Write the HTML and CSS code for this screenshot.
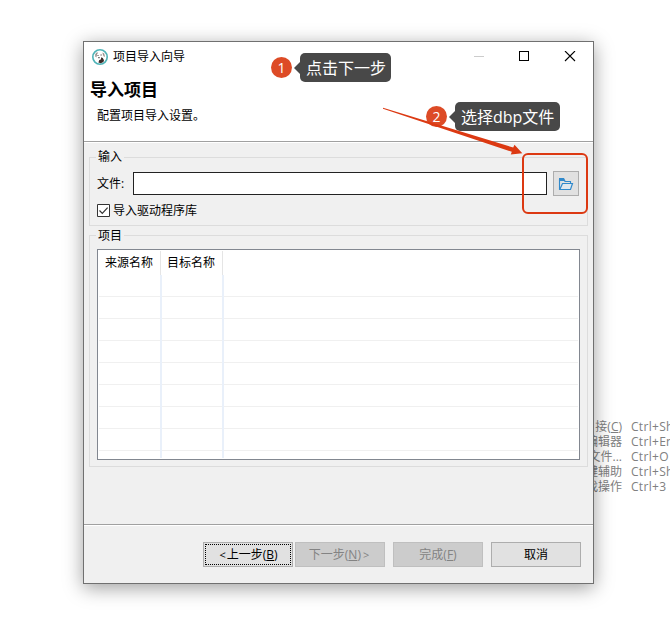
FILE: index.html
```html
<!DOCTYPE html>
<html lang="zh-CN">
<head>
<meta charset="utf-8">
<title>项目导入向导</title>
<link rel="stylesheet" href="styles.css">
</head>
<body>
<div class="menu">
  <span>接(<u>C</u>)</span><span>Ctrl+Sh</span>
  <span>编辑器</span><span>Ctrl+En</span>
  <span>文件...</span><span>Ctrl+O</span>
  <span>键辅助</span><span>Ctrl+Sh</span>
  <span>找操作</span><span>Ctrl+3</span>
</div>
<main class="dialog">
  <header class="head">
    <div class="titlebar">
      <svg class="logo" width="16" height="16" viewBox="0 0 16 16"><circle cx="8" cy="8" r="7.2" fill="#fff" stroke="#4fb3b7" stroke-width="1.6"/><path d="M3.2 5.3 4.6 3.6 6.2 3.4 5 5.4 4.4 8.4 3.2 7.6zM10.4 3.6l1.8 1 .7 2.6-.8.9-1.1-2z" fill="#99938f"/><path d="M6.4 13.6 7.3 11l1.5-.6.5-2.1 1.5.8 1.2 2.2-.6 1.8-2.6 1.2z" fill="#3b2b28"/><path d="M5.5 6h1v1h-1zM8.5 5.4h1.2v1.2H8.5zM6.3 8h1.3v1.3H6.3z" fill="#444"/></svg>
      <span class="name">项目导入向导</span>
      <svg class="controls" width="102" height="12" viewBox="0 0 102 12" shape-rendering="crispEdges"><path d="M0 5.5h10" stroke="#ccc"/><path d="M45.5.5h9v9h-9z" fill="none" stroke="#000"/><path d="M91 0l10 10M101 0 91 10" stroke="#000" stroke-width="1.1" shape-rendering="auto"/></svg>
    </div>
    <h1>导入项目</h1>
    <p>配置项目导入设置。</p>
  </header>
  <section class="content">
    <fieldset class="input-group">
      <legend>输入</legend>
      <div class="file-row">
        <label for="file">文件:</label>
        <input id="file" type="text">
        <button class="browse" aria-label="浏览"><svg width="16" height="14" viewBox="0 0 16 14"><path d="M1.5 12.5v-10h4l1.5 2h5.5v2" fill="none" stroke="#3089cb" stroke-width="1.1"/><path d="M1 1h5l1.5 3H1z" fill="#3089cb"/><path d="M1.8 12.5 4.5 6.5h10l-2 6z" fill="#e1e8ee" stroke="#3089cb" stroke-width="1.2"/></svg></button>
      </div>
      <div class="check-row"><svg width="13" height="13" viewBox="0 0 13 13"><path d="M.5.5h12v12H.5z" fill="#fff" stroke="#333"/><path d="m2.5 6.5 2.8 2.8 5.3-5.6" fill="none" stroke="#333" stroke-width="1.2"/></svg><span>导入驱动程序库</span></div>
    </fieldset>
    <fieldset class="project-group">
      <legend>项目</legend>
      <div class="table">
        <div class="thead"><span>来源名称</span><span>目标名称</span></div>
        <div class="tbody"></div>
      </div>
    </fieldset>
  </section>
  <footer class="foot">
    <button class="focused"><i>&lt;</i>上一步(<u>B</u>)</button>
    <button class="off">下一步(<u>N</u>)<i>&gt;</i></button>
    <button class="off gap">完成(<u>F</u>)</button>
    <button class="gap">取消</button>
  </footer>
</main>
<div class="note note-1"><b>1</b><span>点击下一步</span></div>
<div class="note note-2"><b>2</b><span>选择dbp文件</span></div>
<svg class="arrow" width="142" height="52" viewBox="382 105 142 52"><path d="M383 107.7 513.2 147.6 514.5 144.8 522.3 153.3 510.8 154.6 511.8 151.8 383 108.8z" fill="#dc3912"/></svg>
<div class="highlight"></div>
</body>
</html>
```
FILE: styles.css
```css
* { box-sizing: border-box; }
body {
  margin: 0;
  width: 670px;
  height: 628px;
  padding: 41px 0 0 83px;
  overflow: hidden;
  position: relative;
  background: #fff;
  color: #000;
  font: 12px/16px "Open Sans", "Noto Sans CJK SC", sans-serif;
}
u { text-underline-offset: 1px; }
.menu {
  position: absolute;
  left: 582px;
  top: 419px;
  display: grid;
  grid-template-columns: 40px 39px;
  column-gap: 9px;
  grid-auto-rows: 15px;
  line-height: 15px;
  color: #808080;
  white-space: nowrap;
}
.menu span:nth-child(odd) { text-align: right; }
.menu span:nth-child(even) { letter-spacing: .3px; }
.dialog {
  position: relative;
  width: 511px;
  height: 543px;
  display: flex;
  flex-direction: column;
  background: #f0f0f0;
  border: 1px solid #707070;
  box-shadow: 0 4px 18px rgba(0, 0, 0, .38);
}
.head { height: 101px; background: #fff; border-bottom: 1px solid #fff; box-shadow: inset 0 -1px #a0a0a0; }
.titlebar { display: flex; align-items: center; height: 29px; padding: 0 17px 0 8px; }
.name { margin-left: 5px; }
.controls { margin-left: auto; }
.head h1 { margin: 9px 0 0 6px; font-size: 17px; line-height: 20px; font-weight: 700; }
.head p { margin: 8px 0 0 13px; }
.content { flex: 1; padding: 6px 5px 0; }
fieldset { margin: 0; min-width: 0; border: 1px solid #dcdcdc; }
legend { padding: 0 2px; margin-left: -1px; height: 16px; }
.input-group { height: 77px; padding: 0 8px 0 7px; }
.file-row { display: flex; align-items: center; height: 25px; margin-top: 6px; }
.file-row label { width: 36px; white-space: nowrap; }
.file-row input { width: 414px; height: 23px; padding: 0 3px; border: 1px solid #222; background: #fff; }
.browse { width: 26px; height: 25px; margin-left: 6px; padding: 0; border: 1px solid #adadad; background: #e1e1e1; display: grid; place-items: center; }
.check-row { display: flex; align-items: center; height: 16px; margin-top: 6px; gap: 3px; }
.check-row span { padding-top: 1px; }
.project-group { height: 240px; margin-top: 1px; padding: 0 7px; }
.project-group legend { padding-top: 1px; }
.table { width: 483px; height: 211px; margin-top: 6px; border: 1px solid #828790; background: #fff; padding: 1px; }
.thead { display: flex; height: 24px; line-height: 23px; }
.thead span { width: 62px; padding-left: 6px; border-right: 1px solid #e5e5e5; white-space: nowrap; }
.tbody {
  height: 183px;
  background:
    linear-gradient(#e9f0fa, #e9f0fa) 61px 0 / 2px 100% no-repeat,
    linear-gradient(#e9f0fa, #e9f0fa) 123px 0 / 2px 100% no-repeat,
    repeating-linear-gradient(#fff 0 21px, #f0f0f0 21px 22px);
}
.foot { display: flex; height: 59px; padding: 17px 0 0 119px; border-top: 1px solid #a0a0a0; box-shadow: inset 0 1px #fff; }
.foot button { width: 90px; height: 25px; margin-right: 2px; padding: 0; border: 1px solid #adadad; background: #e1e1e1; font: inherit; color: #000; }
.foot .gap { margin-left: 6px; }
.foot .off { background: #ccc; border-color: #bfbfbf; color: #838383; }
.foot .focused { outline: 1px dotted #000; outline-offset: -3px; }
.foot i { font-style: normal; font-size: 11px; margin: 0 1px; }
.foot .off i { margin: 0 2px; }
.note { position: absolute; display: flex; align-items: center; height: 29px; color: #fff; }
.note b { width: 21px; height: 21px; border-radius: 50%; background: #dd4b26; font-weight: 400; font-size: 14px; line-height: 21px; text-align: center; }
.note span { position: relative; margin-left: 8px; height: 29px; padding: 0 0 0 6px; border-radius: 5px; background: #484848; font-size: 16px; line-height: 31px; white-space: nowrap; }
.note span::before { content: ""; position: absolute; left: -6px; top: 9px; border: solid transparent; border-width: 6px 6px 6px 0; border-right-color: #484848; }
.note-1 { left: 271px; top: 53px; }
.note-1 span { width: 91px; }
.note-2 { left: 426px; top: 102px; }
.note-2 span { width: 105px; }
.arrow { position: absolute; left: 382px; top: 105px; }
.highlight { position: absolute; left: 522px; top: 153px; width: 66px; height: 61px; border: 2px solid #dc3912; border-radius: 6px; }
```
